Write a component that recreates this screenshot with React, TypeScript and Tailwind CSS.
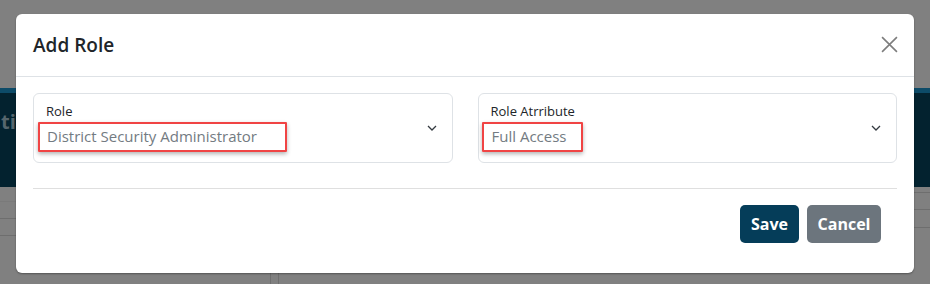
import React from "react";

const font = { fontFamily: '"Open Sans", "Noto Sans", sans-serif' };

function Chevron() {
  return (
    <svg width="10" height="6" viewBox="0 0 10 6" fill="none">
      <polyline points="1,1 5,5 9,1" stroke="#343a40" strokeWidth="1.3" />
    </svg>
  );
}

interface FieldProps {
  label: string;
  value: string;
  boxLeft: string;
  boxWidth: string;
}

function SelectField({ label, value, boxLeft, boxWidth }: FieldProps) {
  return (
    <div className="relative flex h-[70px] items-center rounded-[6px] border border-[#dee2e6] pr-[15px]">
      <div className="flex-1 self-start pl-[12px] pt-[8px]">
        <div className="text-[13px] leading-[18px] text-[#212529]">{label}</div>
        <div className="mt-[5px] pl-[1px] text-[15px] leading-[22px] text-[#737b82]">
          {value}
        </div>
      </div>
      <Chevron />
      {/* red annotation box drawn over the value */}
      <div
        className={`absolute top-[28px] h-[30px] rounded-[1px] border-2 border-[#f04444] shadow-[0_2px_4px_rgba(0,0,0,0.3)] ${boxLeft} ${boxWidth}`}
      />
    </div>
  );
}

function BackdropPage() {
  return (
    <div className="flex h-full w-full flex-col bg-[#808080]">
      <div className="h-[88px]" />
      <div className="h-[5px] bg-[#0d4b68]" />
      <div className="h-[94px] bg-[#03222f] pt-[17px]">
        <span className="ml-[1px] text-[20px] font-bold leading-[24px] text-[#56666d]">ties</span>
      </div>
      <div className="flex flex-1">
        <div className="flex w-[271px] flex-col border-r border-[#6f6f6f]">
          <div className="h-[15px] border-b border-[#7a7a7a]" />
          <div className="h-[17px] border-b border-[#6e6e6e]" />
          <div className="h-[17px] border-b border-[#6e6e6e]" />
          <div className="flex-1" />
        </div>
        <div className="w-[8px] border-r border-[#6f6f6f]" />
        <div className="flex flex-1 flex-col">
          <div className="h-[6px] border-b border-[#6e6e6e]" />
          <div className="h-[17px] border-b border-[#6e6e6e]" />
          <div className="h-[18px] border-b border-[#6e6e6e]" />
          <div className="flex-1" />
        </div>
      </div>
    </div>
  );
}

export default function App() {
  return (
    <div className="relative h-[284px] w-[930px] overflow-hidden" style={font}>
      <BackdropPage />

      <div className="absolute left-[16px] top-[14px] flex h-[259px] w-[898px] flex-col rounded-[6px] bg-white shadow-[0_1px_2px_rgba(0,0,0,0.35)]">
        <div className="flex h-[63px] items-center justify-between border-b border-[#dee2e6] pl-[17px] pr-[16px]">
          <h5 className="text-[19px] font-semibold leading-[24px] text-[#212529]">Add Role</h5>
          <svg width="17" height="17" viewBox="0 0 16 16" fill="none" className="mt-[-1px]">
            <path d="M1 1L15 15M15 1L1 15" stroke="#7d7d7d" strokeWidth="1.5" />
          </svg>
        </div>

        <div className="px-[17px] pt-[16px]">
          <div className="grid grid-cols-2 gap-[25px]">
            <SelectField
              label="Role"
              value="District Security Administrator"
              boxLeft="left-[4px]"
              boxWidth="w-[249px]"
            />
            <SelectField
              label="Role Atrribute"
              value="Full Access"
              boxLeft="left-[3px]"
              boxWidth="w-[101px]"
            />
          </div>
          <div className="mt-[25px] border-t border-[#dfdfdf]" />
          <div className="mt-[16px] flex justify-end gap-[8px] pr-[16px]">
            <button className="h-[38px] w-[59px] rounded-[5px] bg-[#053d59] text-[16px] font-bold text-white">
              Save
            </button>
            <button className="h-[38px] w-[74px] rounded-[5px] bg-[#6c757d] text-[16px] font-bold text-white">
              Cancel
            </button>
          </div>
        </div>
      </div>
    </div>
  );
}
